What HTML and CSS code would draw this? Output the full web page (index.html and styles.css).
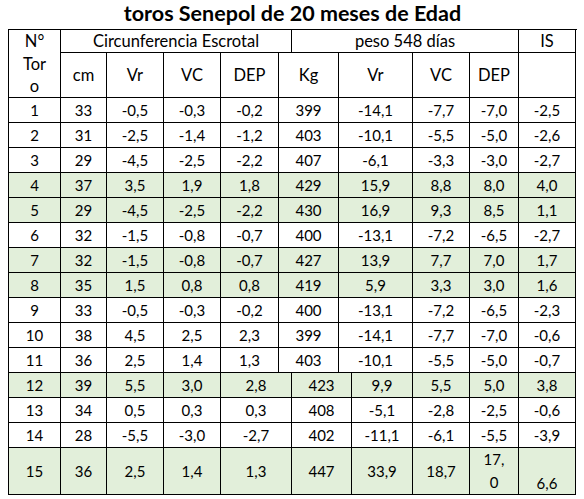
FILE: index.html
```html
<!DOCTYPE html>
<html lang="es">
<head>
<meta charset="utf-8">
<title>toros Senepol de 20 meses de Edad</title>
<link rel="stylesheet" href="styles.css">
</head>
<body>
<div class="page">
  <h1 class="title">toros Senepol de 20 meses de Edad</h1>
  <div class="sheet">
    <div class="row head1">
      <div class="c txt no-bottom top">N°</div>
      <div class="c txt">Circunferencia Escrotal</div>
      <div class="c txt">peso 548 días</div>
      <div class="c txt">IS</div>
    </div>
    <div class="row head2 cols-a">
      <div class="c txt two">Tor<br>o</div>
      <div class="c txt">cm</div>
      <div class="c txt">Vr</div>
      <div class="c txt">VC</div>
      <div class="c txt">DEP</div>
      <div class="c txt">Kg</div>
      <div class="c txt">Vr</div>
      <div class="c txt">VC</div>
      <div class="c txt">DEP</div>
      <div class="c"></div>
    </div>
    <div class="row data cols-a"><div class="c">1</div><div class="c">33</div><div class="c">-0,5</div><div class="c">-0,3</div><div class="c">-0,2</div><div class="c">399</div><div class="c">-14,1</div><div class="c">-7,7</div><div class="c">-7,0</div><div class="c">-2,5</div></div>
    <div class="row data cols-a"><div class="c">2</div><div class="c">31</div><div class="c">-2,5</div><div class="c">-1,4</div><div class="c">-1,2</div><div class="c">403</div><div class="c">-10,1</div><div class="c">-5,5</div><div class="c">-5,0</div><div class="c">-2,6</div></div>
    <div class="row data cols-a"><div class="c">3</div><div class="c">29</div><div class="c">-4,5</div><div class="c">-2,5</div><div class="c">-2,2</div><div class="c">407</div><div class="c">-6,1</div><div class="c">-3,3</div><div class="c">-3,0</div><div class="c">-2,7</div></div>
    <div class="row data cols-a green"><div class="c">4</div><div class="c">37</div><div class="c">3,5</div><div class="c">1,9</div><div class="c">1,8</div><div class="c">429</div><div class="c">15,9</div><div class="c">8,8</div><div class="c">8,0</div><div class="c">4,0</div></div>
    <div class="row data cols-a green"><div class="c">5</div><div class="c">29</div><div class="c">-4,5</div><div class="c">-2,5</div><div class="c">-2,2</div><div class="c">430</div><div class="c">16,9</div><div class="c">9,3</div><div class="c">8,5</div><div class="c">1,1</div></div>
    <div class="row data cols-a"><div class="c">6</div><div class="c">32</div><div class="c">-1,5</div><div class="c">-0,8</div><div class="c">-0,7</div><div class="c">400</div><div class="c">-13,1</div><div class="c">-7,2</div><div class="c">-6,5</div><div class="c">-2,7</div></div>
    <div class="row data cols-a green"><div class="c">7</div><div class="c">32</div><div class="c">-1,5</div><div class="c">-0,8</div><div class="c">-0,7</div><div class="c">427</div><div class="c">13,9</div><div class="c">7,7</div><div class="c">7,0</div><div class="c">1,7</div></div>
    <div class="row data cols-a green"><div class="c">8</div><div class="c">35</div><div class="c">1,5</div><div class="c">0,8</div><div class="c">0,8</div><div class="c">419</div><div class="c">5,9</div><div class="c">3,3</div><div class="c">3,0</div><div class="c">1,6</div></div>
    <div class="row data cols-a"><div class="c">9</div><div class="c">33</div><div class="c">-0,5</div><div class="c">-0,3</div><div class="c">-0,2</div><div class="c">400</div><div class="c">-13,1</div><div class="c">-7,2</div><div class="c">-6,5</div><div class="c">-2,3</div></div>
    <div class="row data cols-a"><div class="c">10</div><div class="c">38</div><div class="c">4,5</div><div class="c">2,5</div><div class="c">2,3</div><div class="c">399</div><div class="c">-14,1</div><div class="c">-7,7</div><div class="c">-7,0</div><div class="c">-0,6</div></div>
    <div class="row data cols-a"><div class="c">11</div><div class="c">36</div><div class="c">2,5</div><div class="c">1,4</div><div class="c">1,3</div><div class="c">403</div><div class="c">-10,1</div><div class="c">-5,5</div><div class="c">-5,0</div><div class="c">-0,7</div></div>
    <div class="row data cols-b green"><div class="c">12</div><div class="c">39</div><div class="c">5,5</div><div class="c">3,0</div><div class="c">2,8</div><div class="c">423</div><div class="c">9,9</div><div class="c">5,5</div><div class="c">5,0</div><div class="c">3,8</div></div>
    <div class="row data cols-b"><div class="c">13</div><div class="c">34</div><div class="c">0,5</div><div class="c">0,3</div><div class="c">0,3</div><div class="c">408</div><div class="c">-5,1</div><div class="c">-2,8</div><div class="c">-2,5</div><div class="c">-0,6</div></div>
    <div class="row data cols-b"><div class="c">14</div><div class="c">28</div><div class="c">-5,5</div><div class="c">-3,0</div><div class="c">-2,7</div><div class="c">402</div><div class="c">-11,1</div><div class="c">-6,1</div><div class="c">-5,5</div><div class="c">-3,9</div></div>
    <div class="row tall cols-b green"><div class="c">15</div><div class="c">36</div><div class="c">2,5</div><div class="c">1,4</div><div class="c">1,3</div><div class="c">447</div><div class="c">33,9</div><div class="c">18,7</div><div class="c wrap">17,<br>0</div><div class="c bottom">6,6</div></div>
  </div>
</div>
</body>
</html>
```

FILE: styles.css
```css
html, body {
  margin: 0;
  padding: 0;
  background: #ffffff;
}

body {
  font-family: Lato, "Liberation Sans", sans-serif;
  color: #000000;
}

.page {
  width: 584px;
  padding-left: 8px;
  box-sizing: border-box;
}

.title {
  margin: 0;
  width: 569px;
  height: 29px;
  font-size: 21.5px;
  font-weight: 700;
  line-height: 27px;
  text-align: center;
}

.sheet {
  width: 569px;
  border-left: 1px solid #000;
  border-top: 1px solid #000;
  box-sizing: border-box;
}

.row {
  display: grid;
}

.head1 {
  grid-template-columns: 52px 231px 227px 57px;
  height: 23px;
}

.cols-a {
  grid-template-columns: 52px 46px 57px 57px 58px 60px 74px 57px 49px 57px;
}

.cols-b {
  grid-template-columns: 52px 46px 57px 57px 71px 60px 61px 57px 49px 57px;
}

.head2 {
  height: 45px;
}

.data {
  height: 25px;
}

.tall {
  height: 47px;
}

.c {
  box-sizing: border-box;
  border-right: 1px solid #000;
  border-bottom: 1px solid #000;
  display: flex;
  align-items: center;
  justify-content: center;
  text-align: center;
  font-size: 15px;
  line-height: 22px;
  white-space: nowrap;
  overflow: hidden;
}

.txt {
  font-size: 16.5px;
}

.no-bottom {
  border-bottom: none;
}

.top {
  align-items: flex-start;
}

.two {
  line-height: 22px;
}

.green .c {
  background: #e2efda;
}

.wrap {
  line-height: 23px;
}

.bottom {
  align-items: flex-end;
  padding-bottom: 0;
}
```
